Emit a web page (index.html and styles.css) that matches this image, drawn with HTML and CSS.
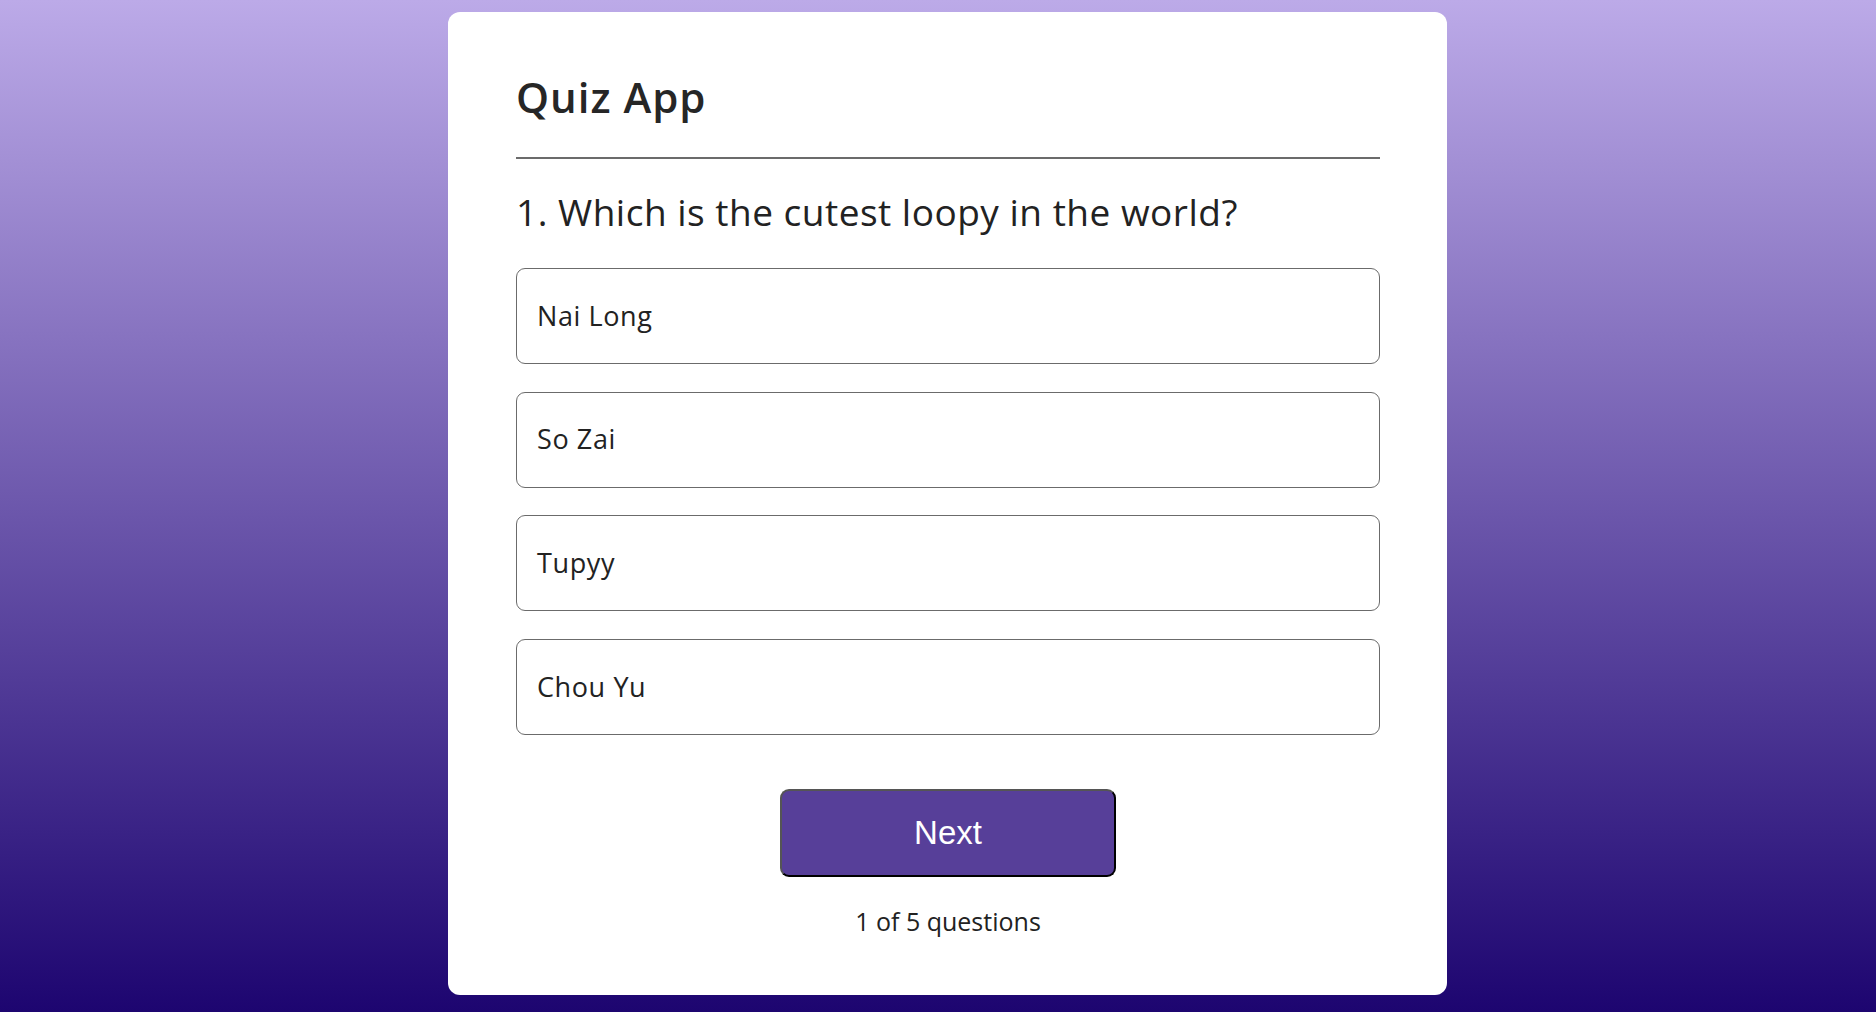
FILE: index.html
```html
<!DOCTYPE html>
<html lang="en">
<head>
<meta charset="UTF-8">
<title>Quiz App</title>
<link rel="stylesheet" href="styles.css">
</head>
<body>
<main class="page">
  <section class="app">
    <h1 class="app-title">Quiz App</h1>
    <div class="quiz">
      <h2 class="question">1. Which is the cutest loopy in the world?</h2>
      <div class="answers">
        <button class="answer">Nai Long</button>
        <button class="answer">So Zai</button>
        <button class="answer">Tupyy</button>
        <button class="answer">Chou Yu</button>
      </div>
      <button class="next-btn">Next</button>
      <p class="progress">1 of 5 questions</p>
    </div>
  </section>
</main>
</body>
</html>
```

FILE: styles.css
```css
* {
  margin: 0;
  padding: 0;
  box-sizing: border-box;
}

html, body {
  height: 100%;
}

body {
  background: linear-gradient(to bottom, #bcaae8 0%, #1d0570 100%);
  font-family: "Open Sans", "Noto Sans", sans-serif;
  color: #222;
  overflow: hidden;
}

.page {
  display: flex;
  justify-content: center;
  align-items: flex-start;
  padding: 12px 0 0 19px;
  height: 100%;
}

.app {
  width: 999px;
  background: #fff;
  border-radius: 12px;
  padding: 60px 67px 59px 68px;
}

.app-title {
  font-size: 42px;
  line-height: 50px;
  font-weight: 600;
  letter-spacing: 1px;
  color: #262626;
  padding-bottom: 35px;
  border-bottom: 2px solid #6b6b6b;
}

.quiz {
  display: flex;
  flex-direction: column;
}

.question {
  margin-top: 31px;
  font-size: 37px;
  line-height: 44px;
  font-weight: 400;
  letter-spacing: 0.5px;
  color: #222;
}

.answers {
  margin-top: 34px;
  display: flex;
  flex-direction: column;
  gap: 27.7px;
}

.answer {
  display: flex;
  align-items: center;
  height: 96px;
  width: 100%;
  padding: 0 20px 2px;
  background: #fff;
  border: 1px solid #6b6b6b;
  border-radius: 9px;
  font-family: "Open Sans", "Noto Sans", sans-serif;
  font-size: 27px;
  letter-spacing: 0.6px;
  color: #222;
  text-align: left;
}

.next-btn {
  align-self: center;
  margin-top: 54px;
  width: 336px;
  height: 88px;
  background: #573f99;
  color: #fff;
  border: 2px solid;
  border-color: #555 #000 #000 #555;
  border-radius: 9px;
  font-family: "Liberation Sans", Arial, sans-serif;
  font-size: 33px;
}

.progress {
  margin-top: 29px;
  text-align: center;
  font-size: 25px;
  line-height: 30px;
  color: #222;
}
```
